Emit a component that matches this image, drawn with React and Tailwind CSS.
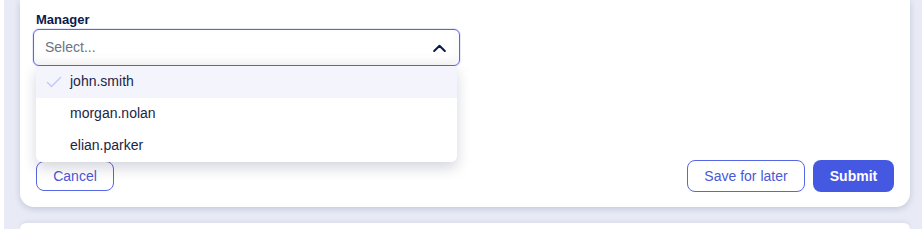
import React from "react";

export default function App() {
  const items = ["john.smith", "morgan.nolan", "elian.parker"];
  return (
    <div className="w-[922px] h-[229px] overflow-hidden bg-white pl-[4px] font-['Liberation_Sans',Arial,sans-serif]">
      <div className="h-full bg-[#e8ebf5] pl-4 pr-3 flex flex-col gap-4">
        <div className="relative bg-white rounded-b-[14px] shadow-[0_2px_6px_rgba(30,40,90,0.18)] px-4 pt-[12px] pb-[15px]">
          <div className="text-[13px] font-bold text-[#0b1a4a] leading-[16px]">Manager</div>
          <div className="relative mt-[1px] -ml-[3px] w-[427px]">
            <div className="h-[37px] rounded-[6px] border border-[#5566e6] shadow-[0_0_0_1px_rgba(85,102,230,0.15),inset_0_-6px_8px_rgba(0,0,0,0.04)] flex items-center justify-between pl-[11px] pr-[13px]">
              <span className="text-[14px] text-[#6b7385]">Select...</span>
              <svg width="13" height="8" viewBox="0 0 13 8" fill="none">
                <polyline points="1.2,7 6.5,1.8 11.8,7" stroke="#0b1a4a" strokeWidth="2" strokeLinecap="round" strokeLinejoin="round" />
              </svg>
            </div>
            <div className="absolute left-[3px] top-[37px] w-[421px] bg-white rounded-b-[6px] shadow-[0_6px_14px_rgba(20,30,70,0.18)] z-10">
              {items.map((it, i) => (
                <div
                  key={it}
                  className={`h-[32px] flex items-center pl-[10px] pb-[1px] text-[14px] text-[#1a2547] ${i === 0 ? "bg-[#f4f4fd]" : ""}`}
                >
                  <span className="w-[24px] flex items-center">
                    {i === 0 && (
                      <svg width="16" height="16" viewBox="0 0 16 16" fill="none">
                        <polyline points="1.5,8.5 5.5,12.5 14.5,3.5" stroke="#c5caf3" strokeWidth="1.5" strokeLinecap="round" strokeLinejoin="round" />
                      </svg>
                    )}
                  </span>
                  {it}
                </div>
              ))}
            </div>
          </div>
          <div className="mt-[94px] flex items-center justify-between">
            <button className="h-[30px] w-[78px] rounded-[8px] border border-[#5566e6] text-[14px] text-[#4a58d9] bg-white">Cancel</button>
            <div className="flex gap-[8px]">
              <button className="h-[32px] w-[118px] rounded-[8px] border border-[#5566e6] text-[14px] text-[#4a58d9] bg-white">Save for later</button>
              <button className="h-[32px] w-[81px] rounded-[8px] bg-[#4558e2] text-[14px] font-bold text-white">Submit</button>
            </div>
          </div>
        </div>
        <div className="h-[40px] bg-white rounded-t-[14px] shadow-[0_-1px_4px_rgba(30,40,90,0.08)]"></div>
      </div>
    </div>
  );
}
